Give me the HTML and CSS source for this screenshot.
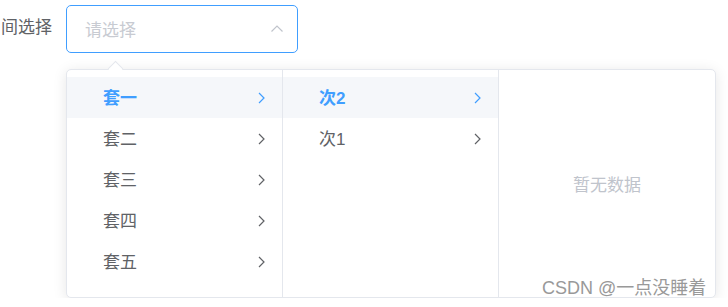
FILE: index.html
```html
<!DOCTYPE html>
<html>
  <head>
    <meta charset="utf-8" />
    <title>级联选择</title>
    <link rel="stylesheet" href="styles.css">
  </head>
  <body>
    <div class="form-item">
      <label class="form-label">间选择</label>
      <div class="cascader">
        <div class="cascader-input">
          <span class="placeholder">请选择</span>
          <svg class="input-arrow" width="12" height="7" viewBox="0 0 12 7">
            <polyline points="0.5,6.5 6,1 11.5,6.5" fill="none" stroke="#c0c4cc" stroke-width="1.2" />
          </svg>
        </div>

        <div class="cas-popup">
          <div class="pop-arrow"></div>
          <div class="cas-panel">
            <div class="cas-menu">
              <ul class="menu-list">
                <li class="node active">
                  <span class="node-label">套一</span>
                  <svg class="node-postfix" width="7" height="12" viewBox="0 0 7 12">
                    <polyline points="1,1 6,6 1,11" />
                  </svg>
                </li>
                <li class="node">
                  <span class="node-label">套二</span>
                  <svg class="node-postfix" width="7" height="12" viewBox="0 0 7 12">
                    <polyline points="1,1 6,6 1,11" />
                  </svg>
                </li>
                <li class="node">
                  <span class="node-label">套三</span>
                  <svg class="node-postfix" width="7" height="12" viewBox="0 0 7 12">
                    <polyline points="1,1 6,6 1,11" />
                  </svg>
                </li>
                <li class="node">
                  <span class="node-label">套四</span>
                  <svg class="node-postfix" width="7" height="12" viewBox="0 0 7 12">
                    <polyline points="1,1 6,6 1,11" />
                  </svg>
                </li>
                <li class="node">
                  <span class="node-label">套五</span>
                  <svg class="node-postfix" width="7" height="12" viewBox="0 0 7 12">
                    <polyline points="1,1 6,6 1,11" />
                  </svg>
                </li>
              </ul>
            </div>

            <div class="cas-menu">
              <ul class="menu-list">
                <li class="node active">
                  <span class="node-label">次2</span>
                  <svg class="node-postfix" width="7" height="12" viewBox="0 0 7 12">
                    <polyline points="1,1 6,6 1,11" />
                  </svg>
                </li>
                <li class="node">
                  <span class="node-label">次1</span>
                  <svg class="node-postfix" width="7" height="12" viewBox="0 0 7 12">
                    <polyline points="1,1 6,6 1,11" />
                  </svg>
                </li>
              </ul>
            </div>

            <div class="cas-menu empty">
              <span class="empty-text">暂无数据</span>
            </div>
          </div>
        </div>
      </div>
    </div>

    <div class="watermark">CSDN @一点没睡着</div>
  </body>
</html>
```

FILE: styles.css
```css
html,
body {
  margin: 0;
  padding: 0;
  background: #fff;
}
body {
  font-family: "Liberation Sans", "Noto Sans CJK SC", sans-serif;
  font-size: 17px;
  color: #606266;
}
.form-item {
  display: flex;
  align-items: flex-start;
  padding-top: 5px;
}
.form-label {
  width: 52px;
  margin-right: 14px;
  text-align: right;
  line-height: 46px;
  white-space: nowrap;
}
.cascader {
  display: flex;
  flex-direction: column;
  align-items: flex-start;
}
.cascader-input {
  box-sizing: border-box;
  width: 232px;
  height: 48px;
  border: 1px solid #409eff;
  border-radius: 5px;
  display: flex;
  align-items: center;
  justify-content: space-between;
  padding: 0 14px 0 18px;
}
.placeholder {
  color: #c8cbd2;
  margin-bottom: 1px;
}
.input-arrow {
  display: block;
  margin-bottom: 1px;
}
.cas-popup {
  position: relative;
  margin-top: 16px;
  background: #fff;
  border: 1px solid #e4e7ed;
  border-radius: 5px;
  box-shadow: 0 2px 14px 0 rgba(0, 0, 0, 0.1);
}
.pop-arrow {
  position: absolute;
  top: -7px;
  left: 43px;
  width: 10px;
  height: 10px;
  background: #fff;
  border-top: 1px solid #e4e7ed;
  border-left: 1px solid #e4e7ed;
  transform: rotate(45deg);
}
.cas-panel {
  display: flex;
  position: relative;
  border-radius: 5px;
  overflow: hidden;
}
.cas-menu {
  box-sizing: border-box;
  flex: none;
  width: 216px;
  height: 227px;
  border-right: 1px solid #e4e7ed;
}
.cas-menu.empty {
  border-right: none;
  display: flex;
  align-items: center;
  justify-content: center;
}
.empty-text {
  color: #c0c4cc;
}
.menu-list {
  list-style: none;
  margin: 0;
  padding: 7px 0;
}
.node {
  position: relative;
  display: flex;
  align-items: center;
  height: 41px;
  padding: 0 36px 0 24px;
  color: #606266;
}
.node-label {
  padding: 0 12px;
  margin-bottom: 3px;
}
.node-postfix {
  position: absolute;
  right: 17px;
  top: 15px;
}
.node-postfix polyline {
  fill: none;
  stroke: #606266;
  stroke-width: 1.2;
}
.node.active {
  background: #f5f7fa;
  color: #409eff;
  font-weight: bold;
}
.node.active .node-postfix polyline {
  stroke: #409eff;
}
.watermark {
  position: absolute;
  left: 542px;
  top: 273px;
  font-size: 18px;
  color: #999;
  text-shadow: 0 0 2px #fff;
  white-space: nowrap;
}
```
